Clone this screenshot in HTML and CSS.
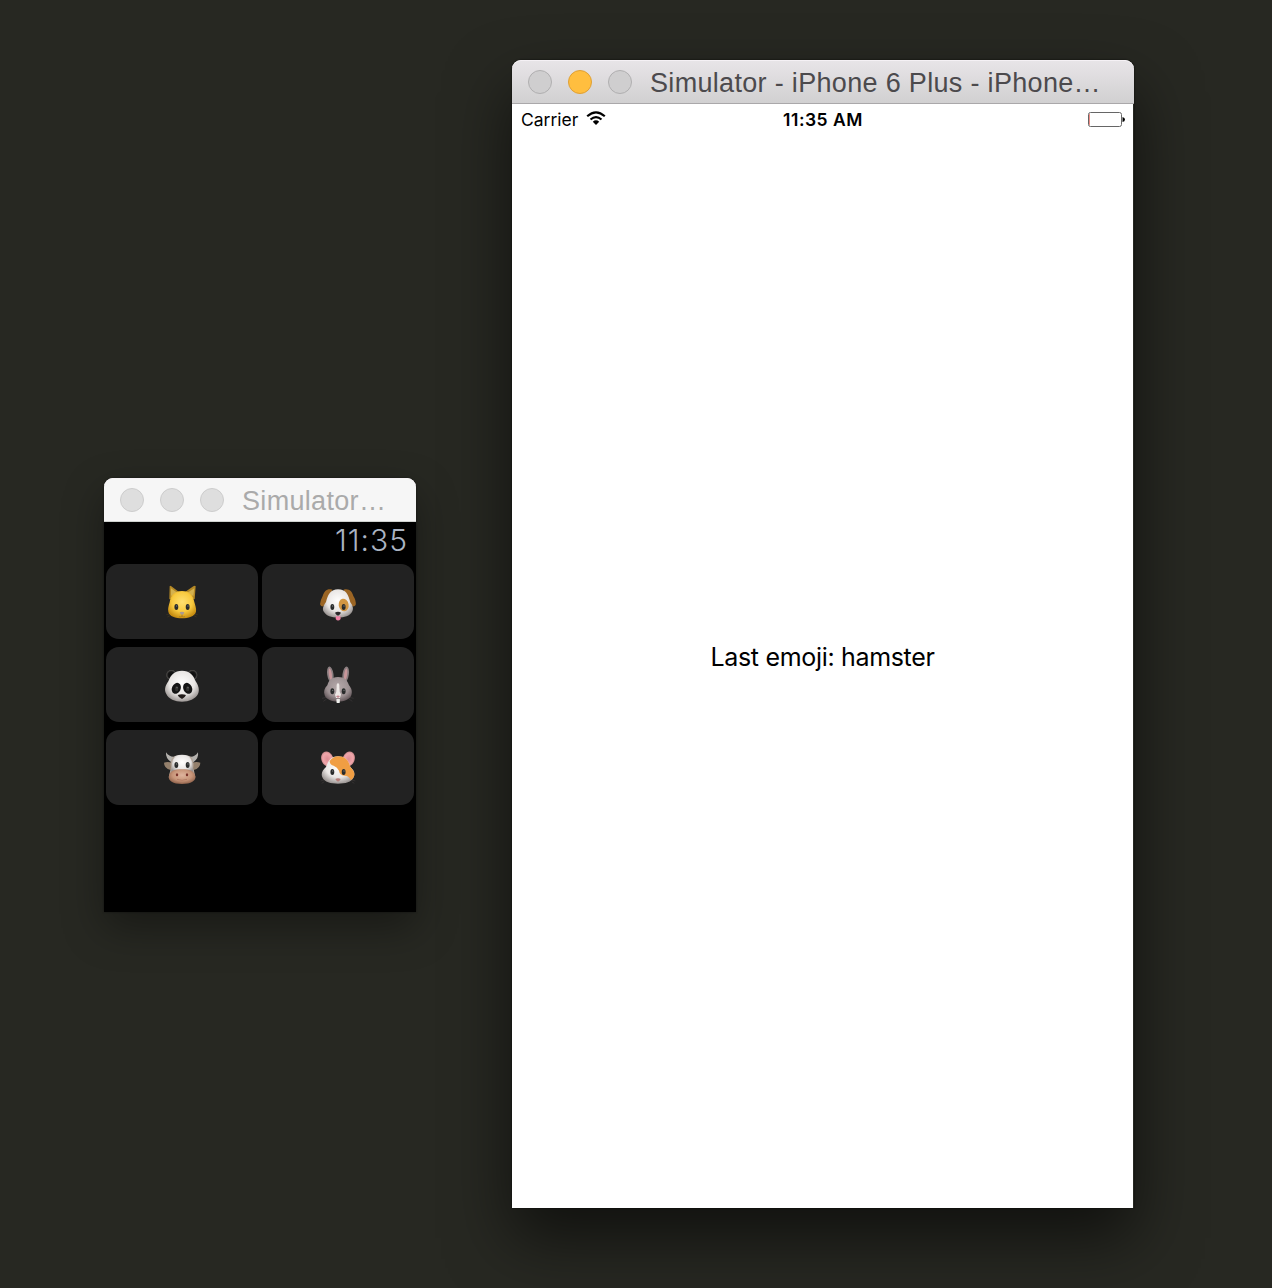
FILE: index.html
```html
<!DOCTYPE html>
<html lang="en">
<head>
<meta charset="utf-8">
<title>Simulator</title>
<link rel="stylesheet" href="styles.css">
</head>
<body>
<svg class="defs" width="0" height="0" aria-hidden="true">
  <defs>
    <radialGradient id="yellow" cx=".5" cy=".4" r=".6"><stop offset="0" stop-color="#ffe071"/><stop offset=".6" stop-color="#f8c93e"/><stop offset="1" stop-color="#c78d12"/></radialGradient>
    <radialGradient id="white" cx=".5" cy=".4" r=".62"><stop offset="0" stop-color="#fffefd"/><stop offset=".6" stop-color="#eae7e5"/><stop offset="1" stop-color="#989290"/></radialGradient>
    <radialGradient id="grey" cx=".5" cy=".4" r=".62"><stop offset="0" stop-color="#b5a9aa"/><stop offset=".65" stop-color="#9c9092"/><stop offset="1" stop-color="#625659"/></radialGradient>
    <radialGradient id="muzzle" cx=".5" cy=".4" r=".6"><stop offset="0" stop-color="#deb49d"/><stop offset=".6" stop-color="#c89579"/><stop offset="1" stop-color="#90634c"/></radialGradient>
    <radialGradient id="pink" cx=".5" cy=".5" r=".55"><stop offset="0" stop-color="#dd8d94"/><stop offset=".65" stop-color="#f0a6ab"/><stop offset="1" stop-color="#bd7e80"/></radialGradient>
    <radialGradient id="black" cx=".5" cy=".5" r=".5"><stop offset="0" stop-color="#0a0a0a"/><stop offset=".65" stop-color="#161616"/><stop offset="1" stop-color="#555350"/></radialGradient>
    <g id="eyes"><ellipse cx="58" cy="81" rx="5.8" ry="9" fill="#292b2b"/><ellipse cx="92" cy="81" rx="5.8" ry="9" fill="#292b2b"/><circle cx="59" cy="78" r="2" fill="#777979"/><circle cx="93" cy="78" r="2" fill="#777979"/></g>
  </defs>
</svg>
<main class="desktop">
  <section class="window watch">
    <header class="titlebar inactive">
      <i class="light"></i><i class="light"></i><i class="light"></i>
      <span class="title">Simulator…</span>
    </header>
    <div class="watch-screen">
      <div class="clock">11:35</div>
      <div class="buttons">
        <button class="key first-row" aria-label="cat"><svg class="emoji" viewBox="0 0 150 138">
          <path d="M37 58 38 19Q39 16 43 19L69 38 60 52ZM113 58 116 19Q114 15 109 19L81 38 91 52Z" fill="#b48825"/>
          <path d="M42 48 42 25 61 38ZM109 48 112 25 91 38Z" fill="#d4b14e"/>
          <path d="M75 33C48 33 41 48 38 67C35 78 32 86 34 95C37 109 56 115 75 115S113 109 117 95C119 85 114 75 112 66C108 46 99 33 75 33Z" fill="url(#yellow)"/>
          <use href="#eyes"/><path d="M68 97Q75 94 82 97Q81 103 75 105Q69 102 68 97Z" fill="#aa9991"/><path d="M75 104V110M66 110Q73 112 75 108Q78 112 84 110" stroke="#a6761c" stroke-width="2" fill="none"/><path d="m36 102-8 2m11 3-8 4m83-9 8 2m-11 3 8 4" stroke="#65501e" stroke-width="1"/>
        </svg></button>
        <button class="key first-row" aria-label="dog"><svg class="emoji" viewBox="0 0 150 138">
          <path d="M58 29C42 25 34 33 29 48Q22 61 21 73Q25 84 35 76Q45 62 58 29M92 29C108 25 117 34 121 48Q130 61 128 75Q122 83 115 76Q105 62 92 29" fill="#9b6524"/>
          <path d="M75 28C53 28 45 43 39 66C30 79 27 88 33 96C40 107 55 113 75 113S110 107 117 96C123 87 119 76 112 67C106 44 99 28 75 28Z" fill="url(#white)"/>
          <ellipse cx="92" cy="75" rx="15" ry="19" transform="rotate(-10 92 75)" fill="#d19643"/><use href="#eyes"/>
          <path d="M66 98Q75 93 84 98Q81 104 75 107Q68 104 66 98" fill="#2a2729"/><path d="M69 107Q75 110 82 107L83 117Q75 126 68 117Z" fill="#f083a7"/>
        </svg></button>
        <button class="key" aria-label="panda"><svg class="emoji" viewBox="0 0 150 138">
          <circle cx="43" cy="39" r="15" fill="url(#black)"/><circle cx="106" cy="39" r="15" fill="url(#black)"/>
          <path d="M75 26C52 26 41 39 34 58C24 72 21 85 28 96C34 111 54 119 75 119S116 111 123 96C129 84 124 70 116 58C109 39 98 26 75 26Z" fill="url(#white)"/>
          <ellipse cx="58" cy="79" rx="13" ry="17" transform="rotate(25 58 79)" fill="#151515"/><ellipse cx="92" cy="79" rx="13" ry="17" transform="rotate(-25 92 79)" fill="#151515"/>
          <ellipse cx="59" cy="80" rx="5" ry="8" fill="#30302e"/><ellipse cx="92" cy="80" rx="5" ry="8" fill="#30302e"/><circle cx="60" cy="77" r="2" fill="#777"/><circle cx="93" cy="77" r="2" fill="#777"/>
          <path d="M62 99Q75 94 87 99Q84 107 75 111Q65 107 62 99" fill="#211b19"/>
        </svg></button>
        <button class="key" aria-label="rabbit"><svg class="emoji" viewBox="0 0 150 138">
          <ellipse cx="52" cy="37" rx="9.5" ry="24" transform="rotate(-8 52 37)" fill="#8b7f81"/><ellipse cx="98" cy="37" rx="9.5" ry="24" transform="rotate(8 98 37)" fill="#8b7f81"/>
          <ellipse cx="52" cy="37" rx="4.5" ry="18" transform="rotate(-8 52 37)" fill="#c7969a"/><ellipse cx="98" cy="37" rx="4.5" ry="18" transform="rotate(8 98 37)" fill="#c7969a"/>
          <path d="M75 45C54 45 47 56 43 70C34 79 31 89 35 100C39 112 57 119 75 119S111 112 115 100C119 88 115 78 108 70C103 55 96 45 75 45Z" fill="url(#grey)"/>
          <path d="M75 64Q80 64 79 77Q79 91 84 97L81 108H69L66 98Q71 91 71 77Q70 64 75 64" fill="#ede8e6"/>
          <g transform="translate(0 7)"><use href="#eyes"/></g><path d="M69 103Q75 98 81 103L75 108Z" fill="#c48790"/><path d="M70 112Q75 109 81 112L80 123H71Z" fill="#f0f0ed"/><path d="m40 106-13 3m14 2-10 7m78-12 13 3m-14 2 10 7" stroke="#554d4f" stroke-width="1"/>
        </svg></button>
        <button class="key" aria-label="cow"><svg class="emoji" viewBox="0 0 150 138">
          <path d="M54 35Q37 37 27 22Q25 40 43 52ZM97 35Q114 37 123 22Q126 40 109 52Z" fill="#b5b2ae"/>
          <path d="M46 53Q31 49 21 53Q21 70 41 75ZM105 53Q120 49 130 53Q130 70 110 75Z" fill="#94806c"/>
          <path d="M52 34Q75 26 99 34Q112 43 109 67L115 97Q97 113 75 113T35 97L42 67Q38 43 52 34" fill="#b2a498"/>
          <path d="M55 33Q75 26 95 33Q107 45 106 61L109 85H42L45 61Q44 45 55 33" fill="url(#white)"/>
          <use href="#eyes" transform="translate(0 -21)"/>
          <path d="M75 73C53 73 39 77 36 93C32 107 48 117 75 117S118 107 115 93C111 77 98 73 75 73Z" fill="url(#muzzle)"/>
          <ellipse cx="60" cy="89" rx="3.5" ry="4.5" fill="#7a332a"/><ellipse cx="90" cy="89" rx="3.5" ry="4.5" fill="#7a332a"/><path d="M60 103Q75 109 90 103" stroke="#a87059" stroke-width="2" fill="none"/>
        </svg></button>
        <button class="key" aria-label="hamster"><svg class="emoji" viewBox="0 0 150 138">
          <ellipse cx="43" cy="42" rx="18" ry="23" transform="rotate(-20 43 42)" fill="url(#pink)"/><ellipse cx="107" cy="42" rx="18" ry="23" transform="rotate(20 107 42)" fill="url(#pink)"/>
          <path d="M75 34C53 34 44 50 39 66C29 75 23 85 28 97C34 112 53 116 75 116S116 112 122 97C128 84 122 75 112 66C107 48 98 34 75 34Z" fill="url(#white)"/>
          <path d="M50 48Q60 34 76 34C98 34 107 48 112 66C123 77 127 86 122 97Q119 102 114 106Q108 91 94 92Q80 91 78 77Q73 66 62 62Q51 61 50 48" fill="#f09e43"/>
          <use href="#eyes"/><path d="M67 102Q75 98 83 102Q80 108 75 110Q69 107 67 102" fill="#b77e7a"/><path d="m33 105-10 3m11 2-8 5m91-10 10 3m-11 2 8 5" stroke="#58504e" stroke-width="1"/>
        </svg></button>
      </div>
    </div>
  </section>
  <section class="window phone">
    <header class="titlebar">
      <i class="light"></i><i class="light amber"></i><i class="light"></i>
      <span class="title">Simulator - iPhone 6 Plus - iPhone…</span>
    </header>
    <div class="phone-screen">
      <div class="status">
        <div class="carrier"><span>Carrier</span>
          <svg class="wifi" width="20" height="15" viewBox="0 0 20 15"><g fill="none" stroke="#000" stroke-width="2.2"><path d="M1.2 5.2Q10-2.6 18.8 5.2"/><path d="M4.5 8.5Q10 3.8 15.5 8.5"/></g><path d="M6.8 10.7Q10 8 13.2 10.7L10 14Z"/></svg>
        </div>
        <div class="time">11:35 AM</div>
        <svg class="battery" width="37" height="15" viewBox="0 0 37 15"><rect x=".5" y=".5" width="33" height="14" rx="2" fill="#fff" stroke="#666"/><path d="M1.5 2V13" stroke="#ef8f88" stroke-width="1"/><path d="M34.5 5Q37 5.5 37 7.5T34.5 10Z"/></svg>
      </div>
      <div class="message"><span>Last emoji: hamster</span></div>
    </div>
  </section>
</main>
</body>
</html>
```
FILE: styles.css
```css
* { box-sizing: border-box; }
body { margin: 0; background: #272822; }
.defs { position: absolute; }
.desktop { position: relative; width: 1272px; height: 1288px; overflow: hidden; background: #272822; }
.window { position: absolute; display: flex; flex-direction: column; border-radius: 9px 9px 0 0; }
.watch { left: 104px; top: 478px; width: 312px; height: 434px; box-shadow: 0 16px 40px rgba(0,0,0,.36), 0 0 2px rgba(0,0,0,.5); }
.phone { left: 512px; top: 60px; width: 622px; height: 1148px; box-shadow: 0 30px 64px rgba(0,0,0,.58), 0 0 2px rgba(0,0,0,.8); }
.titlebar { display: flex; align-items: center; flex: none; height: 44px; padding-left: 16px; border-radius: 9px 9px 0 0; border-bottom: 1px solid #aaa8aa; background: linear-gradient(#e8e5e8, #d1d0d1); box-shadow: inset 0 1px #f5f1f5; color: #4c4a4d; }
.inactive { background: #f6f6f6; border-bottom-color: #cfd2cf; color: #aaa; }
.light { width: 24px; height: 24px; margin-right: 16px; border: 1px solid #b0afb0; border-radius: 50%; background: #cfcecf; }
.inactive .light { border-color: #cdcdcd; background: #dedede; }
.titlebar .amber { border-color: #dfa035; background: #ffbe3f; }
.title { padding: 2px 0 0 2px; font: 27px/32px "Liberation Sans", Arial, sans-serif; letter-spacing: .32px; white-space: nowrap; }
.watch-screen { flex: 1; background: #000; }
.clock { height: 42px; padding: 0 8px 0 0; color: #abb4c3; font: 350 30px/36px Inter, sans-serif; letter-spacing: 1px; text-align: right; }
.buttons { display: grid; grid-template-columns: 152px 152px; grid-auto-rows: 75px; gap: 8px 4px; padding: 0 2px; }
.key { display: flex; justify-content: center; align-items: flex-start; margin: 0; padding: 15px 0 0; border: 0; border-radius: 13px; background: #222; }
.first-row { padding-top: 16px; }
.emoji { width: 50px; height: 46px; }
.phone-screen { display: flex; flex-direction: column; flex: 1; width: 621px; background: #fff; color: #000; }
.status { display: grid; grid-template-columns: 1fr auto 1fr; align-items: center; height: 31px; padding: 0 8px 0 9px; font: 17.5px/30px Inter, sans-serif; }
.carrier { display: flex; align-items: center; gap: 8px; }
.wifi { margin-bottom: 2px; }
.time { font-weight: 600; letter-spacing: .5px; }
.battery { justify-self: end; }
.message { flex: 1; display: flex; justify-content: center; padding-top: 506px; font: 25px/32px Inter, sans-serif; letter-spacing: -.32px; }
```
